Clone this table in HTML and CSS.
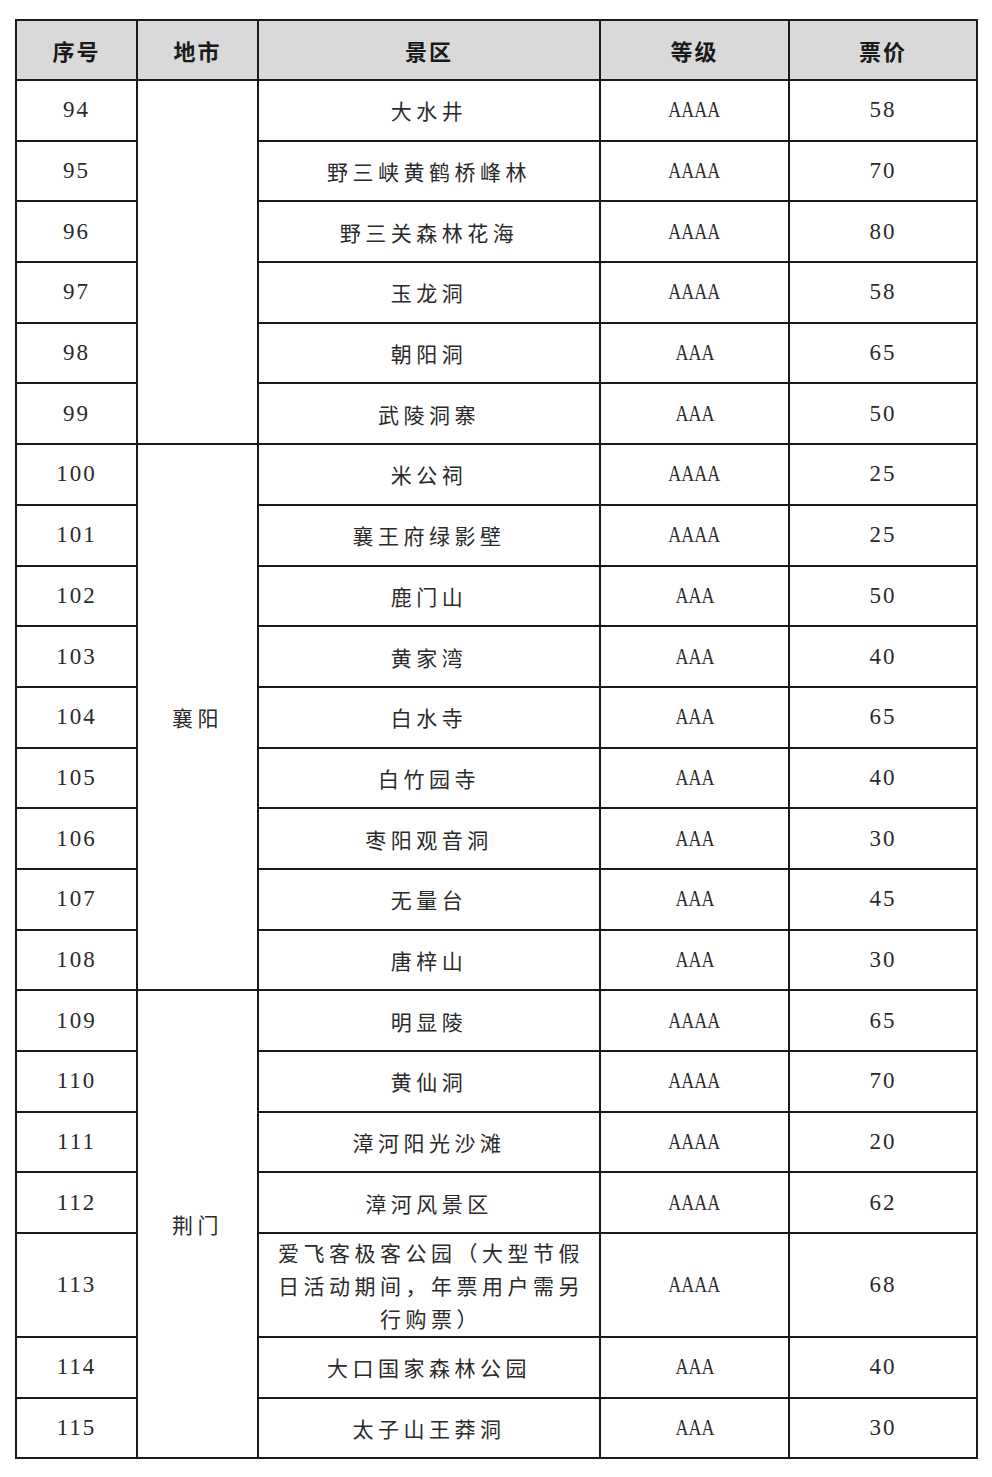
FILE: index.html
```html
<!DOCTYPE html>
<html lang="zh">
<head>
<meta charset="utf-8">
<title>景区门票</title>
<link rel="stylesheet" href="styles.css">
</head>
<body>
<table class="tbl">
  <colgroup>
    <col class="c1"><col class="c2"><col class="c3"><col class="c4"><col class="c5">
  </colgroup>
  <thead>
    <tr><th>序号</th><th>地市</th><th>景区</th><th>等级</th><th>票价</th></tr>
  </thead>
  <tbody>
    <tr><td class="num">94</td><td class="city" rowspan="6"></td><td class="name">大水井</td><td class="lvl"><span>AAAA</span></td><td class="num">58</td></tr>
    <tr><td class="num">95</td><td class="name">野三峡黄鹤桥峰林</td><td class="lvl"><span>AAAA</span></td><td class="num">70</td></tr>
    <tr><td class="num">96</td><td class="name">野三关森林花海</td><td class="lvl"><span>AAAA</span></td><td class="num">80</td></tr>
    <tr><td class="num">97</td><td class="name">玉龙洞</td><td class="lvl"><span>AAAA</span></td><td class="num">58</td></tr>
    <tr><td class="num">98</td><td class="name">朝阳洞</td><td class="lvl"><span>AAA</span></td><td class="num">65</td></tr>
    <tr><td class="num">99</td><td class="name">武陵洞寨</td><td class="lvl"><span>AAA</span></td><td class="num">50</td></tr>
    <tr><td class="num">100</td><td class="city" rowspan="9">襄阳</td><td class="name">米公祠</td><td class="lvl"><span>AAAA</span></td><td class="num">25</td></tr>
    <tr><td class="num">101</td><td class="name">襄王府绿影壁</td><td class="lvl"><span>AAAA</span></td><td class="num">25</td></tr>
    <tr><td class="num">102</td><td class="name">鹿门山</td><td class="lvl"><span>AAA</span></td><td class="num">50</td></tr>
    <tr><td class="num">103</td><td class="name">黄家湾</td><td class="lvl"><span>AAA</span></td><td class="num">40</td></tr>
    <tr><td class="num">104</td><td class="name">白水寺</td><td class="lvl"><span>AAA</span></td><td class="num">65</td></tr>
    <tr><td class="num">105</td><td class="name">白竹园寺</td><td class="lvl"><span>AAA</span></td><td class="num">40</td></tr>
    <tr><td class="num">106</td><td class="name">枣阳观音洞</td><td class="lvl"><span>AAA</span></td><td class="num">30</td></tr>
    <tr><td class="num">107</td><td class="name">无量台</td><td class="lvl"><span>AAA</span></td><td class="num">45</td></tr>
    <tr><td class="num">108</td><td class="name">唐梓山</td><td class="lvl"><span>AAA</span></td><td class="num">30</td></tr>
    <tr><td class="num">109</td><td class="city" rowspan="7">荆门</td><td class="name">明显陵</td><td class="lvl"><span>AAAA</span></td><td class="num">65</td></tr>
    <tr><td class="num">110</td><td class="name">黄仙洞</td><td class="lvl"><span>AAAA</span></td><td class="num">70</td></tr>
    <tr><td class="num">111</td><td class="name">漳河阳光沙滩</td><td class="lvl"><span>AAAA</span></td><td class="num">20</td></tr>
    <tr><td class="num">112</td><td class="name">漳河风景区</td><td class="lvl"><span>AAAA</span></td><td class="num">62</td></tr>
    <tr class="tall"><td class="num">113</td><td class="name multi">爱飞客极客公园（大型节假日活动期间，年票用户需另行购票）</td><td class="lvl"><span>AAAA</span></td><td class="num">68</td></tr>
    <tr><td class="num">114</td><td class="name">大口国家森林公园</td><td class="lvl"><span>AAA</span></td><td class="num">40</td></tr>
    <tr><td class="num">115</td><td class="name">太子山王莽洞</td><td class="lvl"><span>AAA</span></td><td class="num">30</td></tr>
  </tbody>
</table>
</body>
</html>
```

FILE: styles.css
```css
html, body {
  margin: 0;
  padding: 0;
  background: #ffffff;
}

body {
  padding: 19px 0 0 15px;
  font-family: "Liberation Serif", "Noto Sans CJK SC", serif;
  color: #222222;
}

.tbl {
  border-collapse: collapse;
  table-layout: fixed;
  width: 961px;
  border: 2px solid #1a1a1a;
}

.c1 { width: 121px; }
.c2 { width: 121px; }
.c3 { width: 342px; }
.c4 { width: 189px; }
.c5 { width: 188px; }

.tbl th,
.tbl td {
  border: 2px solid #1a1a1a;
  padding: 0;
  text-align: center;
  vertical-align: middle;
  height: 58.7px;
}

.tbl th {
  background: #d9d9d9;
  font-family: "Noto Sans CJK SC", sans-serif;
  font-weight: 700;
  font-size: 22px;
  letter-spacing: 2px;
  color: #1a1a1a;
  height: 58px;
}

.num {
  font-family: "Liberation Serif", serif;
  font-size: 23px;
  letter-spacing: 2px;
  color: #2a2a2a;
}

.lvl span {
  display: inline-block;
  font-family: "Liberation Serif", serif;
  font-size: 23px;
  transform: scaleX(0.78);
  color: #2a2a2a;
}

.name,
.city {
  font-family: "Noto Sans CJK SC", sans-serif;
  font-weight: 400;
  font-size: 21px;
  letter-spacing: 4.5px;
  color: #2a2a2a;
}

.tbl td.name.multi {
  padding: 0 14px 0 18px;
  line-height: 33px;
}

.tall td {
  height: 102px;
}
```
